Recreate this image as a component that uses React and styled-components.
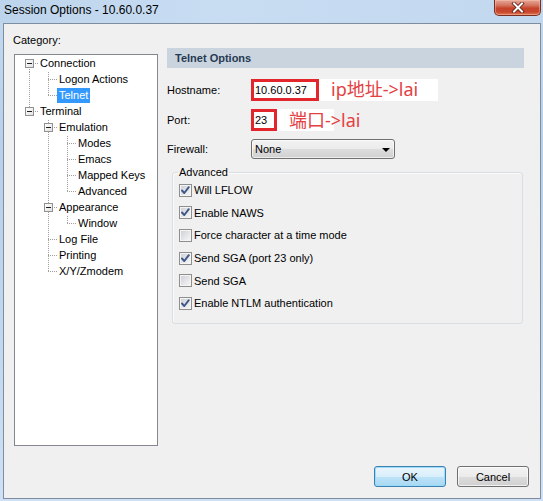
import React from 'react';
import styled, { createGlobalStyle } from 'styled-components';

const Global = createGlobalStyle`
  html, body { margin: 0; padding: 0; background: #bdd4eb; }
  body { font-family: "Liberation Sans", Arial, sans-serif; font-size: 11px; color: #000; }
  #root { width: 543px; height: 501px; }
`;

const Window = styled.div`
  width: 543px;
  height: 501px;
  display: flex;
  flex-direction: column;
  background: linear-gradient(to bottom, #c3d9ef 0%, #b8d0ea 30%, #c2d8ee 70%, #cfe1f4 100%);
  overflow: hidden;
`;

const TitleBar = styled.div`
  height: 23px;
  flex-shrink: 0;
  display: flex;
  align-items: flex-start;
  justify-content: space-between;
  padding-left: 4px;
  background: linear-gradient(to right, #bcd4ec 0%, #c8ddf2 40%, #c2d8ee 100%);
`;

const Title = styled.div`
  font-family: "Liberation Sans", Arial, sans-serif;
  font-size: 12px;
  line-height: 20px;
  color: #000;
`;

const CloseButton = styled.div`
  width: 47px;
  height: 16px;
  margin-right: 2px;
  box-sizing: border-box;
  border: 1px solid #7a2e22;
  border-top: none;
  border-radius: 0 0 5px 5px;
  background: linear-gradient(to bottom, #e6a797 0%, #d57562 35%, #c4432a 55%, #c8482d 80%, #e07a55 100%);
  box-shadow: inset 0 0 0 1px rgba(255, 200, 180, 0.45);
  display: flex;
  align-items: center;
  justify-content: center;
`;

const Body = styled.div`
  flex: 1;
  margin: 0 2px 2px 3px;
  border: 1px solid #7e8d9f;
  background: #f0f0f0;
  display: flex;
  flex-direction: column;
`;

const Main = styled.div`
  display: grid;
  grid-template-columns: 145px 357px;
  column-gap: 9px;
  padding: 9px 0 0 9px;
  align-items: start;
`;

const LeftCol = styled.div`
  display: flex;
  flex-direction: column;
`;

const CategoryLabel = styled.div`
  line-height: 14px;
  height: 14px;
`;

const Tree = styled.div`
  margin: 7px 0 0 1px;
  width: 144px;
  height: 392px;
  box-sizing: border-box;
  border: 1px solid #828790;
  background: #fff;
  padding: 1px 0 0 5px;
`;

const TreeRow = styled.div`
  display: flex;
  height: 16px;
`;

const DOT_V = 'repeating-linear-gradient(to bottom, #a0a0a0 0 1px, transparent 1px 2px)';
const DOT_H = 'repeating-linear-gradient(to right, #a0a0a0 0 1px, transparent 1px 2px)';

const vPart = {
  full: { y: 0, h: 16 },
  top: { y: 0, h: 8 },
  bottom: { y: 7, h: 9 },
};

const Guide = styled.div`
  width: 19px;
  height: 16px;
  flex-shrink: 0;
  background-repeat: no-repeat;
  ${({ $v, $h }) => {
    const imgs = [];
    const pos = [];
    const size = [];
    if ($v && vPart[$v]) {
      imgs.push(DOT_V);
      pos.push(`9px ${vPart[$v].y}px`);
      size.push(`1px ${vPart[$v].h}px`);
    }
    if ($h) {
      imgs.push(DOT_H);
      pos.push('9px 7px');
      size.push('10px 1px');
    }
    if (!imgs.length) return '';
    return `
      background-image: ${imgs.join(', ')};
      background-position: ${pos.join(', ')};
      background-size: ${size.join(', ')};
    `;
  }}
`;

const Expander = styled.div`
  width: 9px;
  height: 9px;
  box-sizing: border-box;
  margin: 3px 0 0 5px;
  border: 1px solid #919191;
  background: linear-gradient(to bottom right, #ffffff, #e2e2e2);
  display: flex;
  align-items: center;
  justify-content: center;
`;

const Minus = styled.div`
  width: 5px;
  height: 1px;
  background: #1e1e1e;
`;

const NodeLabel = styled.div`
  margin-left: -1px;
  padding: 0 2px;
  height: 15px;
  line-height: 15px;
  white-space: nowrap;
  background: ${({ $selected }) => ($selected ? '#3399ff' : 'transparent')};
  color: ${({ $selected }) => ($selected ? '#fff' : '#000')};
`;

const RightCol = styled.div`
  margin-top: 15px;
  display: flex;
  flex-direction: column;
`;

const PanelHeader = styled.div`
  height: 20px;
  line-height: 20px;
  padding-left: 8px;
  background: #c9d4df;
  color: #263a52;
  font-weight: bold;
`;

const Form = styled.div`
  margin-top: 11px;
  display: grid;
  grid-template-columns: 84px auto;
  grid-template-rows: 22px 22px 20px;
  row-gap: 8px;
  align-items: center;
  justify-items: start;
`;

const FieldLabel = styled.div`
  line-height: 14px;
`;

const Field = styled.div`
  width: ${({ $w }) => $w}px;
  height: 22px;
  background: #fff;
  display: flex;
  align-items: center;
`;

const Marked = styled.div`
  width: ${({ $w }) => $w}px;
  height: 22px;
  box-sizing: border-box;
  border: 3px solid #e2262b;
  padding-left: 1px;
  line-height: 16px;
  flex-shrink: 0;
  background: #fff;
`;

const Note = styled.div`
  margin-left: 12px;
  margin-top: ${({ $lift }) => ($lift ? -$lift * 2 : 0)}px;
  font-family: "Noto Sans", "Noto Sans CJK SC", sans-serif;
  font-size: 18px;
  line-height: 22px;
  color: #e4403f;
  white-space: nowrap;
`;

const Select = styled.div`
  width: 144px;
  height: 20px;
  box-sizing: border-box;
  border: 1px solid #707070;
  border-radius: 3px;
  background: linear-gradient(to bottom, #f3f3f3 0%, #ebebeb 50%, #dddddd 51%, #d0d0d0 100%);
  box-shadow: inset 0 0 0 1px rgba(255, 255, 255, 0.6);
  display: flex;
  align-items: center;
  justify-content: space-between;
  padding: 0 4px 0 3px;
`;

const Arrow = styled.div`
  width: 0;
  height: 0;
  border-left: 4px solid transparent;
  border-right: 4px solid transparent;
  border-top: 4px solid #000;
  margin-top: 1px;
`;

const Group = styled.fieldset`
  margin: 7px 1px 0 5px;
  padding: 0 0 8px 6px;
  border: 1px solid #d5dfe5;
  border-radius: 3px;
  box-shadow: inset 1px 1px 0 #fbfbfb;
  min-width: 0;
`;

const Legend = styled.legend`
  padding: 0 1px;
  margin-left: -1px;
  line-height: 13px;
`;

const CheckList = styled.div`
  display: grid;
  grid-auto-rows: 22.6px;
`;

const CheckRow = styled.label`
  display: flex;
  align-items: center;
  gap: 2px;
`;

const Box = styled.span`
  width: 13px;
  height: 13px;
  box-sizing: border-box;
  border: 1px solid #8e8f8f;
  background: linear-gradient(135deg, #caced4 0%, #e4e6e9 55%, #f8f8f8 100%);
  box-shadow: inset 0 0 0 1px #f4f4f4;
  display: inline-flex;
  align-items: center;
  justify-content: center;
  flex-shrink: 0;
`;

const Footer = styled.div`
  margin-top: 20px;
  display: flex;
  justify-content: flex-end;
  gap: 11px;
  padding-right: 11px;
`;

const Button = styled.div`
  width: 72px;
  height: 21px;
  box-sizing: border-box;
  border-radius: 3px;
  display: flex;
  align-items: center;
  justify-content: center;
  border: 1px solid ${({ $primary }) => ($primary ? '#3c7fb1' : '#707070')};
  background: ${({ $primary }) =>
    $primary
      ? 'linear-gradient(to bottom, #e9f5fc 0%, #d9eefb 50%, #bde3f8 51%, #a8d8f3 100%)'
      : 'linear-gradient(to bottom, #f3f3f3 0%, #ebebeb 50%, #dddddd 51%, #cfcfcf 100%)'};
  box-shadow: inset 0 0 0 1px ${({ $primary }) => ($primary ? 'rgba(150,220,250,0.9)' : 'rgba(255,255,255,0.7)')};
`;

const treeRows = [
  { label: 'Connection', guides: [{ v: 'bottom', h: true, exp: true }] },
  { label: 'Logon Actions', guides: [{ v: 'full' }, { v: 'full', h: true }] },
  { label: 'Telnet', selected: true, guides: [{ v: 'full' }, { v: 'top', h: true }] },
  { label: 'Terminal', guides: [{ v: 'top', h: true, exp: true }] },
  { label: 'Emulation', guides: [{}, { v: 'full', h: true, exp: true }] },
  { label: 'Modes', guides: [{}, { v: 'full' }, { v: 'full', h: true }] },
  { label: 'Emacs', guides: [{}, { v: 'full' }, { v: 'full', h: true }] },
  { label: 'Mapped Keys', guides: [{}, { v: 'full' }, { v: 'full', h: true }] },
  { label: 'Advanced', guides: [{}, { v: 'full' }, { v: 'top', h: true }] },
  { label: 'Appearance', guides: [{}, { v: 'full', h: true, exp: true }] },
  { label: 'Window', guides: [{}, { v: 'full' }, { v: 'top', h: true }] },
  { label: 'Log File', guides: [{}, { v: 'full', h: true }] },
  { label: 'Printing', guides: [{}, { v: 'full', h: true }] },
  { label: 'X/Y/Zmodem', guides: [{}, { v: 'top', h: true }] },
];

const checks = [
  { label: 'Will LFLOW', on: true },
  { label: 'Enable NAWS', on: true },
  { label: 'Force character at a time mode', on: false },
  { label: 'Send SGA (port 23 only)', on: true },
  { label: 'Send SGA', on: false },
  { label: 'Enable NTLM authentication', on: true },
];

function CheckBox({ on }) {
  return (
    <Box>
      {on && (
        <svg width="11" height="11" viewBox="0 0 11 11">
          <polyline points="2,5.5 4.3,8 8.8,2.2" fill="none" stroke="#3f5689" strokeWidth="1.9" strokeLinecap="round" strokeLinejoin="round" />
        </svg>
      )}
    </Box>
  );
}

export default function App() {
  return (
    <>
      <Global />
      <Window>
        <TitleBar>
          <Title>Session Options - 10.60.0.37</Title>
          <CloseButton>
            <svg width="14" height="11" viewBox="0 0 14 11">
              <path d="M3 1.5 L11 9.5 M11 1.5 L3 9.5" stroke="#5a1a10" strokeWidth="3.6" strokeLinecap="square" />
              <path d="M3 1.5 L11 9.5 M11 1.5 L3 9.5" stroke="#ffffff" strokeWidth="2" strokeLinecap="square" />
            </svg>
          </CloseButton>
        </TitleBar>
        <Body>
          <Main>
            <LeftCol>
              <CategoryLabel>Category:</CategoryLabel>
              <Tree>
                {treeRows.map((r) => (
                  <TreeRow key={r.label}>
                    {r.guides.map((g, i) => (
                      <Guide key={i} $v={g.v} $h={g.h}>
                        {g.exp && (
                          <Expander>
                            <Minus />
                          </Expander>
                        )}
                      </Guide>
                    ))}
                    <NodeLabel $selected={r.selected}>{r.label}</NodeLabel>
                  </TreeRow>
                ))}
              </Tree>
            </LeftCol>
            <RightCol>
              <PanelHeader>Telnet Options</PanelHeader>
              <Form>
                <FieldLabel>Hostname:</FieldLabel>
                <Field $w={187}>
                  <Marked $w={68}>10.60.0.37</Marked>
                  <Note $lift={1}>ip地址-&gt;lai</Note>
                </Field>
                <FieldLabel>Port:</FieldLabel>
                <Field $w={83}>
                  <Marked $w={26}>23</Marked>
                  <Note>端口-&gt;lai</Note>
                </Field>
                <FieldLabel>Firewall:</FieldLabel>
                <Select>
                  <span>None</span>
                  <Arrow />
                </Select>
              </Form>
              <Group>
                <Legend>Advanced</Legend>
                <CheckList>
                  {checks.map((c) => (
                    <CheckRow key={c.label}>
                      <CheckBox on={c.on} />
                      <span>{c.label}</span>
                    </CheckRow>
                  ))}
                </CheckList>
              </Group>
            </RightCol>
          </Main>
          <Footer>
            <Button $primary>OK</Button>
            <Button>Cancel</Button>
          </Footer>
        </Body>
      </Window>
    </>
  );
}
